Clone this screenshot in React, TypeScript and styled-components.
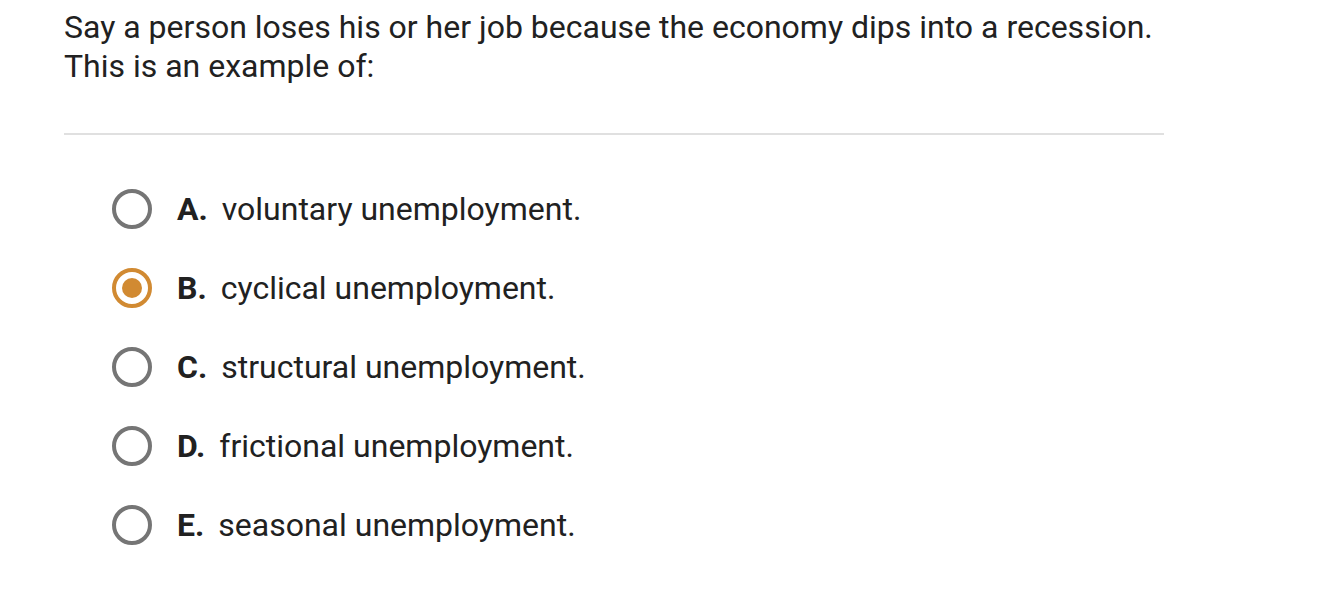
import React, { useState } from "react";
import styled, { createGlobalStyle } from "styled-components";

const GlobalStyle = createGlobalStyle`
  body {
    margin: 0;
    background: #fff;
    font-family: Roboto, "Liberation Sans", Arial, sans-serif;
    color: #212121;
  }
`;

const Page = styled.div`
  width: 1100px;
  padding: 8px 0 0 64px;
`;

const Question = styled.div`
  font-size: 32px;
  line-height: 39px;
  color: #212121;
  padding-bottom: 47px;
  border-bottom: 2px solid #e0e0e0;
`;

const Options = styled.div`
  display: flex;
  flex-direction: column;
  gap: 39px;
  padding: 54px 0 0 48px;
`;

const Option = styled.label`
  display: flex;
  align-items: center;
  gap: 25px;
  font-size: 32px;
  line-height: 40px;
  cursor: pointer;
`;

const Radio = styled.span<{ $checked: boolean }>`
  box-sizing: border-box;
  width: 40px;
  height: 40px;
  border-radius: 50%;
  border: 4px solid ${({ $checked }) => ($checked ? "#d18a32" : "#757575")};
  display: flex;
  align-items: center;
  justify-content: center;
  flex-shrink: 0;
  &::after {
    content: "";
    width: 20px;
    height: 20px;
    border-radius: 50%;
    background: #d18a32;
    display: ${({ $checked }) => ($checked ? "block" : "none")};
  }
`;

const Letter = styled.span`
  font-weight: 700;
  margin-right: 14px;
`;

const options = [
  { key: "A", text: "voluntary unemployment." },
  { key: "B", text: "cyclical unemployment." },
  { key: "C", text: "structural unemployment." },
  { key: "D", text: "frictional unemployment." },
  { key: "E", text: "seasonal unemployment." },
];

export default function App() {
  const [selected, setSelected] = useState("B");
  return (
    <Page>
      <GlobalStyle />
      <Question>
        Say a person loses his or her job because the economy dips into a recession.
        <br />
        This is an example of:
      </Question>
      <Options>
        {options.map((o) => (
          <Option key={o.key} onClick={() => setSelected(o.key)}>
            <Radio $checked={selected === o.key} />
            <span>
              <Letter>{o.key}.</Letter>
              {o.text}
            </span>
          </Option>
        ))}
      </Options>
    </Page>
  );
}
